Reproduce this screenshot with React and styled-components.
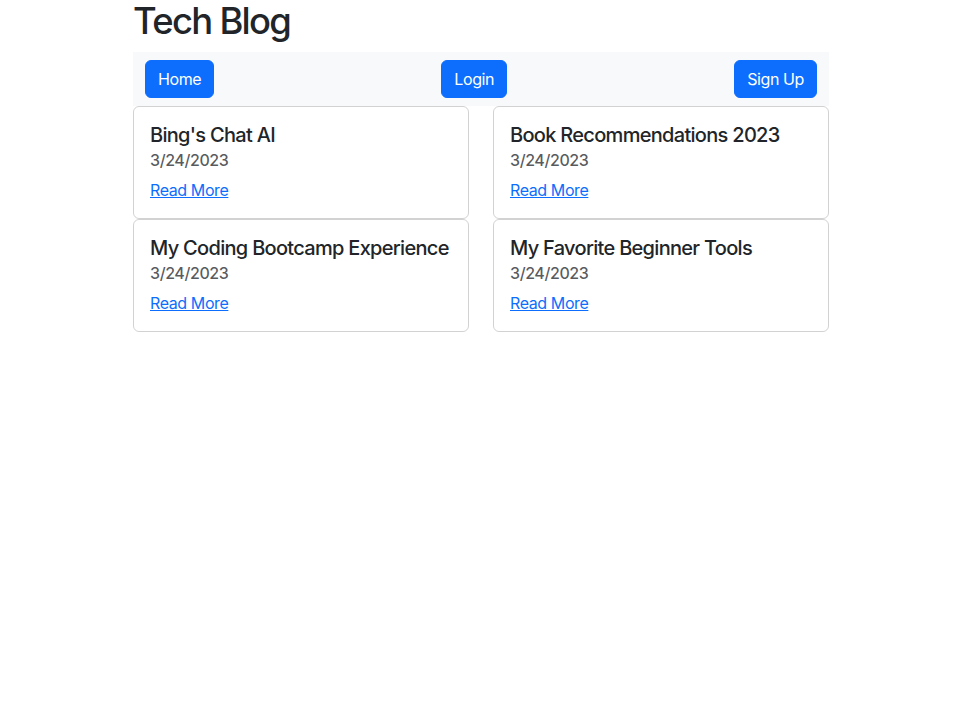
import React from "react";
import styled, { createGlobalStyle } from "styled-components";

const GlobalStyle = createGlobalStyle`
  body {
    margin: 0;
    font-family: Inter, "Noto Sans", "Liberation Sans", sans-serif;
    font-size: 16px;
    line-height: 1.5;
    letter-spacing: -0.4px;
    color: #212529;
    background: #fff;
  }
  * {
    box-sizing: border-box;
  }
`;

const Container = styled.div`
  width: 720px;
  margin: 0 auto;
  padding: 0 12px;
`;

const Title = styled.h1`
  font-size: 36.4px;
  font-weight: 500;
  line-height: 1.2;
  letter-spacing: -1.7px;
  margin: 0 0 8px;
`;

const Nav = styled.nav`
  display: flex;
  justify-content: space-between;
  align-items: center;
  padding: 8px 12px;
  background: #f8f9fa;
`;

const Button = styled.a`
  display: inline-block;
  padding: 6px 12px;
  border-radius: 6px;
  background: #0d6efd;
  border: 1px solid #0d6efd;
  color: #fff;
  font-size: 16px;
  line-height: 24px;
  text-decoration: none;
`;

const Grid = styled.div`
  display: grid;
  grid-template-columns: 1fr 1fr;
  column-gap: 24px;
`;

const Card = styled.div`
  border: 1px solid rgba(0, 0, 0, 0.175);
  border-radius: 6px;
  padding: 16px;
`;

const CardTitle = styled.h5`
  font-size: 20px;
  font-weight: 500;
  line-height: 1.2;
  letter-spacing: -0.7px;
  margin: 0 0 8px;
`;

const CardDate = styled.h6`
  font-size: 16px;
  font-weight: 500;
  line-height: 1.2;
  margin: -4px 0 8px;
  color: rgba(33, 37, 41, 0.75);
`;

const ReadMore = styled.a`
  display: block;
  color: #0d6efd;
  text-decoration: underline;
  line-height: 24px;
`;

const posts = [
  { id: 1, title: "Bing's Chat AI", date: "3/24/2023" },
  { id: 2, title: "Book Recommendations 2023", date: "3/24/2023" },
  { id: 3, title: "My Coding Bootcamp Experience", date: "3/24/2023" },
  { id: 4, title: "My Favorite Beginner Tools", date: "3/24/2023" },
];

export default function App() {
  return (
    <>
      <GlobalStyle />
      <Container>
        <Title>Tech Blog</Title>
        <Nav>
          <Button href="#">Home</Button>
          <Button href="#">Login</Button>
          <Button href="#">Sign Up</Button>
        </Nav>
        <Grid>
          {posts.map((post) => (
            <Card key={post.id}>
              <CardTitle>{post.title}</CardTitle>
              <CardDate>{post.date}</CardDate>
              <ReadMore href="#">Read More</ReadMore>
            </Card>
          ))}
        </Grid>
      </Container>
    </>
  );
}
